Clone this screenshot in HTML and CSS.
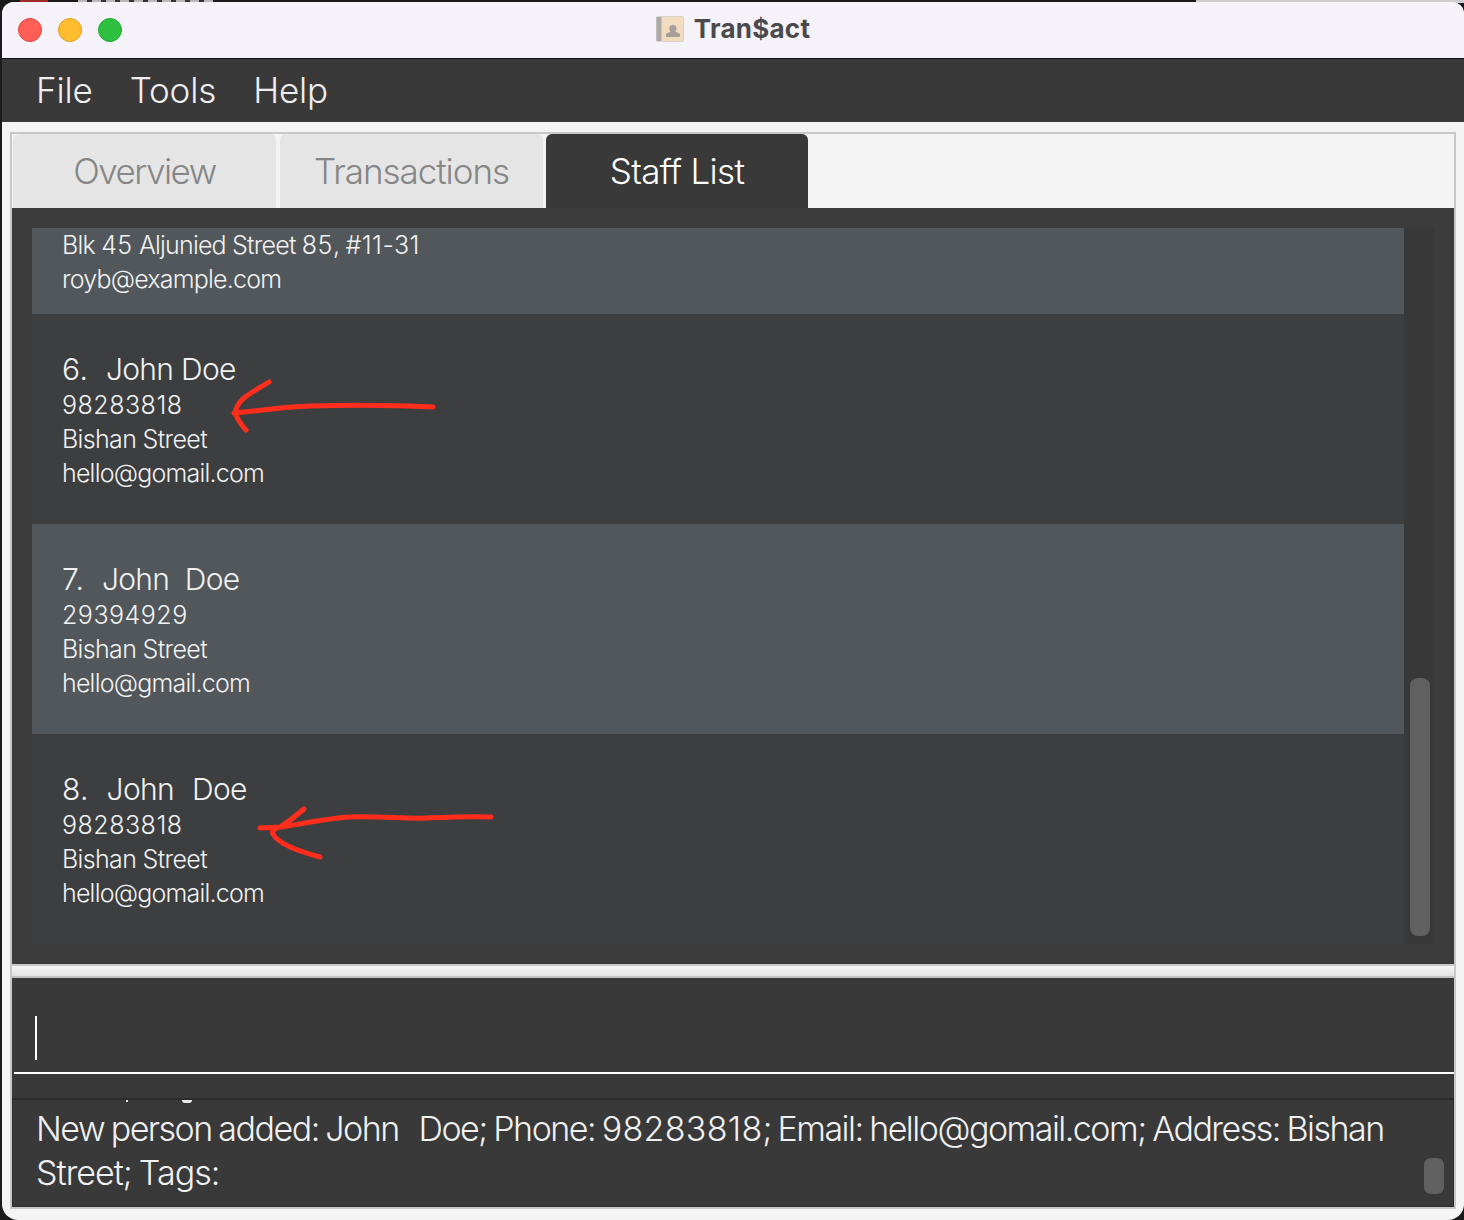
FILE: index.html
```html
<!DOCTYPE html>
<html lang="en">
<head>
<meta charset="utf-8">
<title>Tran$act</title>
<link rel="stylesheet" href="styles.css">
</head>
<body>
<div class="topstrip"><span class="strip-red"></span><span class="strip-text"></span></div>
<div class="window">
  <header class="titlebar">
    <div class="lights"><span class="light red"></span><span class="light yellow"></span><span class="light green"></span></div>
    <div class="title">
      <svg class="app-icon" width="28" height="26" viewBox="0 0 28 26"><rect x="0.500" y="0.500" width="27" height="25" rx="1.500" fill="#f1dcc0" stroke="#d9d2c8"/><rect x="0.500" y="1" width="5" height="24" fill="#aeaaa8"/><path d="M10 21v-2.500c0-1.500 3.500-1.800 4.500-3-1.500-1.500-2-6.500 2.500-6.500s4 5 2.500 6.500c1 1.200 4.500 1.500 4.500 3v2.500z" fill="#a69e98"/></svg>
      <span>Tran$act</span>
    </div>
  </header>
  <nav class="menubar"><span>File</span><span>Tools</span><span>Help</span></nav>
  <main class="content">
    <section class="tabpane">
      <div class="tabs">
        <div class="tab tab-overview">Overview</div>
        <div class="tab tab-transactions">Transactions</div>
        <div class="tab active">Staff List</div>
      </div>
      <div class="listpanel">
        <div class="list">
          <div class="rows">
            <article class="row alt partial">
              <p class="line">Blk <span class="num">45</span> Aljunied Street <span class="num">85</span>, <span class="num">#11-31</span></p>
              <p class="line">royb@example.com</p>
            </article>
            <article class="row">
              <h2 class="name"><span class="idx">6.&nbsp; </span>John Doe</h2>
              <p class="line"><span class="num">98283818</span></p>
              <p class="line addr">Bishan Street</p>
              <p class="line">hello@gomail.com</p>
              <svg class="arrow arrow-a" width="230" height="70" viewBox="0 0 230 70"><path d="M49 12C30 24 18 28 15 43M14 43C40 41 60 37 90 36C130 35 170 35 213 37M15 43C18 50 22 56 26 60"/></svg>
            </article>
            <article class="row alt">
              <h2 class="name"><span class="idx">7.&nbsp; </span>John&nbsp; Doe</h2>
              <p class="line"><span class="num">29394929</span></p>
              <p class="line addr">Bishan Street</p>
              <p class="line">hello@gmail.com</p>
            </article>
            <article class="row">
              <h2 class="name"><span class="idx">8.&nbsp; </span><span class="tight-name">John &nbsp; Doe</span></h2>
              <p class="line"><span class="num">98283818</span></p>
              <p class="line addr">Bishan Street</p>
              <p class="line">hello@gomail.com</p>
              <svg class="arrow arrow-b" width="250" height="65" viewBox="0 0 250 65"><path d="M10 28L32 27C55 23 80 18 100 17C130 16 155 19 177 18C200 17 220 16 241 17M54 9C46 16 38 22 30 27C24 29 21 31 23 34C28 44 48 51 70 57"/></svg>
            </article>
          </div>
          <div class="scrolltrack"><div class="thumb"></div></div>
        </div>
      </div>
    </section>
    <div class="splitter"></div>
    <section class="command">
      <div class="inputbox"><span class="caret"></span></div>
      <div class="gap"></div>
    </section>
    <section class="result">
      <span class="clip-mark clip-a"></span><span class="clip-mark clip-b"></span>
      <p class="result-text">New person added: John &nbsp; Doe; Phone: <span class="num-lg">98283818</span>; Email: hello@gomail.com; Address: Bishan</p>
      <p class="result-text result-second">Street; Tags:</p>
      <div class="result-thumb"></div>
    </section>
  </main>
</div>
</body>
</html>
```
FILE: styles.css
```css
* { box-sizing: border-box; }
html, body { margin: 0; padding: 0; }
body { width: 1464px; height: 1220px; overflow: hidden; background: #1c1c1c; font-family: Inter, "Noto Sans", sans-serif; position: relative; }
p, h2 { margin: 0; font-weight: 400; }

.topstrip { position: absolute; left: 0; top: 0; width: 1464px; height: 3px; background: linear-gradient(to right, #1a1a1a 1196px, #cfcfcf 1196px); }
.strip-red { position: absolute; left: 20px; top: 0; width: 28px; height: 2px; background: #a02a2a; }
.strip-text { position: absolute; left: 78px; top: 0; width: 135px; height: 2px; background: repeating-linear-gradient(to right, #b8b8b8 0 9px, #333 9px 14px); }

.window { margin: 2px 0 0 2px; width: 1462px; height: 1218px; border-radius: 12px 12px 16px 16px; overflow: hidden; background: #f4f4f4; display: flex; flex-direction: column; position: relative; }

.titlebar { height: 57px; flex: none; background: #f5f2fa; border-bottom: 1px solid #111; display: flex; align-items: center; justify-content: center; position: relative; }
.lights { position: absolute; left: 16px; top: 16px; display: flex; gap: 16px; }
.light { width: 24px; height: 24px; border-radius: 50%; }
.red { background: #ff5f57; border: 1px solid #e2463f; }
.yellow { background: #febc2e; border: 1px solid #dea123; }
.green { background: #2dc13f; border: 1px solid #1fa82f; }
.title { display: flex; align-items: center; gap: 10px; font-size: 26px; font-weight: 700; color: #4a4a4c; margin-top: -3px; letter-spacing: 0.25px; }
.app-icon { flex: none; }

.menubar { height: 63px; flex: none; background: #393939; color: #efefef; display: flex; align-items: center; gap: 37px; padding: 0 0 2px 34px; font-size: 35px; font-weight: 300; letter-spacing: -0.15px; }

.content { flex: 1; display: flex; flex-direction: column; padding: 10px 8px 11px 8px; min-height: 0; }

.tabpane { height: 832px; flex: none; border: 2px solid #c8c8c8; border-bottom: 0; display: flex; flex-direction: column; }
.tabs { height: 74px; flex: none; display: flex; gap: 4px; padding-left: 1px; }
.tab { width: 263px; background: #e5e5e5; color: #868686; border-radius: 6px 6px 0 0; display: flex; align-items: center; justify-content: center; font-size: 35px; font-weight: 300; letter-spacing: -0.7px; }
.tab-overview { letter-spacing: -1.5px; }
.tab-transactions { letter-spacing: -1.05px; }
.tab.active { width: 262px; margin-left: -1px; background: #393939; color: #fff; }

.listpanel { flex: 1; min-height: 0; background: #3c3c3c; padding: 20px; }
.list { height: 716px; display: flex; }
.rows { flex: 1; display: flex; flex-direction: column; min-width: 0; }
.row { height: 210px; flex: none; background: #3c3e40; color: #f1f1f1; padding: 37px 0 0 30px; position: relative; }
.row.alt { background: #51575a; }
.row.partial { height: 86px; padding-top: 0; }
.name { font-size: 30px; line-height: 37px; font-weight: 300; letter-spacing: -0.7px; }
.idx { letter-spacing: 0.4px; }
.tight-name { word-spacing: -1.7px; }
.line { font-size: 25px; line-height: 34px; font-weight: 300; letter-spacing: -0.8px; }
.addr { letter-spacing: -0.65px; }
.num { letter-spacing: 0.5px; }
.arrow { position: absolute; fill: none; stroke: #ff2d1c; stroke-width: 5; stroke-linecap: round; stroke-linejoin: round; }
.arrow-a { left: 188px; top: 56px; }
.arrow-b { left: 218px; top: 66px; }

.scrolltrack { width: 30px; flex: none; background: #383838; padding: 450px 4px 8px 6px; }
.thumb { height: 258px; background: #606060; border-radius: 8px; }

.splitter { height: 14px; flex: none; border: 2px solid #c8c8c8; border-bottom-color: #c4c4c4; background: linear-gradient(#f6f6f6, #e2e2e2); }

.command { height: 120px; flex: none; background: #393939; border-left: 2px solid #c8c8c8; border-right: 2px solid #c8c8c8; display: flex; flex-direction: column; }
.inputbox { height: 96px; flex: none; margin-left: 2px; border-bottom: 2px solid #fff; padding: 38px 0 0 21px; }
.caret { display: block; width: 2px; height: 44px; background: #fff; }
.gap { flex: 1; }

.result { flex: 1; min-height: 0; background: #393939; border: 2px solid #c8c8c8; border-top: 0; box-shadow: inset 0 2px 0 #2b2b2b, inset 0 0 0 1px #2d2d2d; position: relative; padding: 9px 20px 0 24px; }
.result-text { font-size: 34px; line-height: 44px; font-weight: 300; color: #f1f1f1; letter-spacing: -1.5px; word-spacing: -1.5px; white-space: nowrap; }
.result-second { letter-spacing: -1px; }
.num-lg { letter-spacing: 0.3px; }
.result-thumb { position: absolute; right: 10px; top: 60px; width: 20px; height: 36px; border-radius: 7px; background: #606060; }
.clip-mark { position: absolute; top: 2px; background: #e8e8e8; }
.clip-a { left: 114px; width: 2px; height: 2px; }
.clip-b { left: 170px; width: 10px; height: 3px; border-radius: 0 0 6px 6px; }
```
